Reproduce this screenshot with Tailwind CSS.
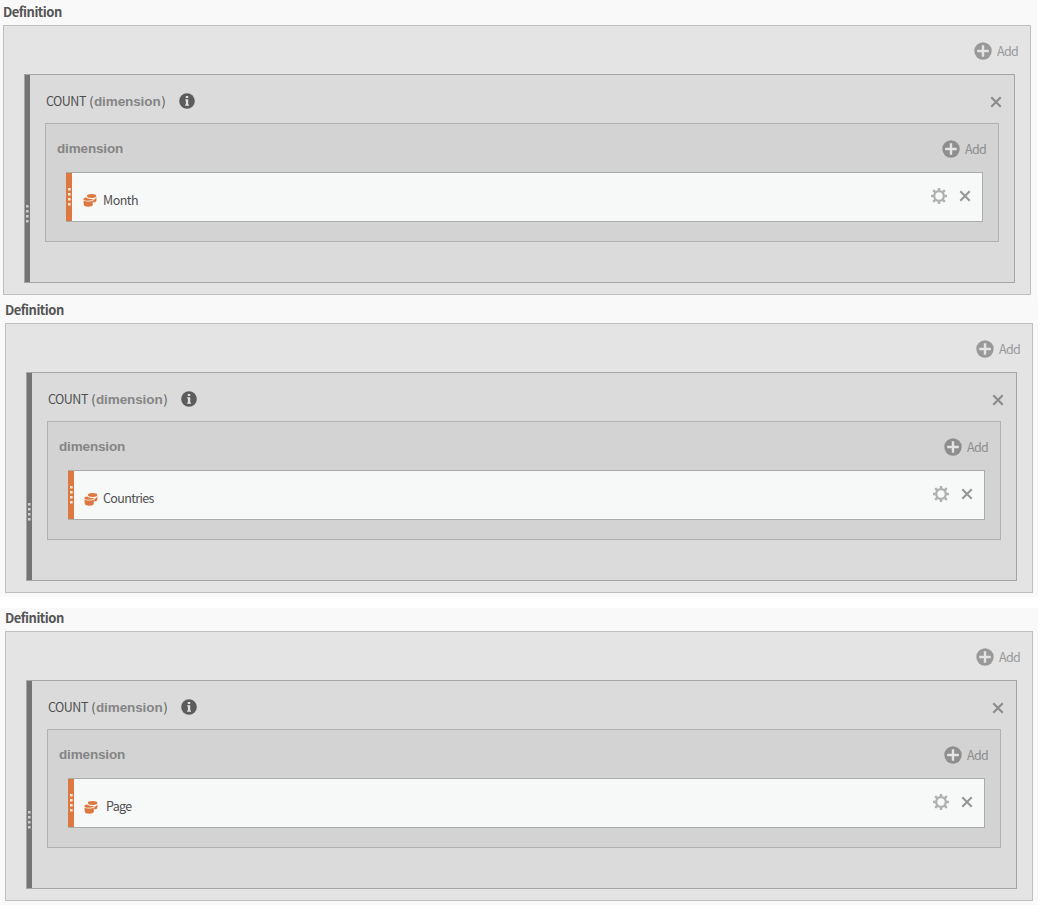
<!DOCTYPE html>
<html lang="en">
<head>
  <meta charset="UTF-8" />
  <meta name="viewport" content="width=device-width, initial-scale=1.0"/>
  <title>Definition</title>
  <script src="https://cdn.jsdelivr.net/npm/@tailwindcss/browser@4"></script>
</head>
<body class="bg-white font-['Noto_Sans_CJK_SC',sans-serif] text-[12.5px] leading-5 tracking-[-0.5px] text-[#4f4f4f]">
  <!-- Shared icons -->
  <svg class="hidden">
    <symbol id="plus" viewBox="0 0 18 18">
      <circle cx="9" cy="9" r="8.7" fill="currentColor"/>
      <path d="M9 3.2v11.6M3.2 9h11.6" stroke="#e4e4e4" stroke-width="2.4"/>
    </symbol>
    <symbol id="info" viewBox="0 0 16 16">
      <circle cx="8" cy="8" r="7.8" fill="#5c5c5c"/>
      <path d="M6.8 2.9h2.4v2.200H6.800zM6.200 6.300h3v5.200h.8v1.300H6.100v-1.300h.8V7.500h-.7z" fill="#e2e2e2"/>
    </symbol>
    <symbol id="close" viewBox="0 0 12 12">
      <path d="M1.3 1.3l9.4 9.4M10.7 1.3l-9.4 9.4" stroke="currentColor" stroke-width="2.1"/>
    </symbol>
    <symbol id="gear" viewBox="0 0 16 16">
      <circle cx="8" cy="8" r="4.8" fill="none" stroke="#b0b0b0" stroke-width="2.3"/>
      <path d="M8 0v3M8 13v3M0 8h3M13 8h3M2.2 2.2l2.4 2.4M11.4 11.4l2.4 2.4M2.2 13.8l2.4-2.4M11.4 4.6l2.4-2.4" stroke="#b0b0b0" stroke-width="2.5"/>
    </symbol>
    <symbol id="data" viewBox="0 0 14 13">
      <ellipse cx="8.6" cy="2" rx="4.7" ry="1.9" fill="#dc7840"/>
      <path d="M13.4 3.3v3.200c0 1.100-1.300 1.900-3.200 2.100V6c1.500-.5 2.700-1.500 3.200-2.700z" fill="#dc7840"/>
      <path d="M.4 5.200c0-1 .9-1.600 2.800-1.700.9 1.200 4 1.700 7 1.200-.5 1.200-2.400 2-5 2S.4 6.200.4 5.200z" fill="#dc7840"/>
      <path d="M.4 6.800c1.200.5 2.900.7 4.900.6 1.900-.1 3.300-.4 4.500-1v4.400c0 1.200-2 1.900-4.500 1.900S.8 12 .8 10.800z" fill="#dc7840"/>
    </symbol>
    <symbol id="grip" viewBox="0 0 4 18">
      <path d="M1 0h2.600v2.600H1zM1 5h2.600v2.600H1zM1 10h2.600v2.600H1zM1 15h2.600v2.600H1z" fill="currentColor"/>
    </symbol>
  </svg>

  <!-- Month -->
  <section class="w-[1037px] h-[298px] bg-[#f9f9f9] pl-[3px] pt-0.5">
    <h2 class="h-[23px] text-[13px] font-bold text-[#555]">Definition</h2>
    <div class="w-[1028px] h-[270px] bg-[#e4e4e4] border border-[#bebebe] pl-5 pr-[15px]">
      <div class="h-12 flex items-center justify-end gap-[5px] pt-px -mr-[3px] text-[#999]">
        <svg class="size-[18px]"><use href="#plus"/></svg>
        <span class="tracking-[-0.7px]">Add</span>
      </div>
      <div class="h-[209px] flex border border-[#a5a5a5] bg-[#dbdbdb]">
        <div class="w-[5px] shrink-0 bg-[#747474] pt-[130px] text-[#ccc]">
          <svg class="w-1 h-[18px]"><use href="#grip"/></svg>
        </div>
        <div class="flex-1 pl-[15px] pr-[15px]">
          <div class="h-12 flex items-center pt-[5px] pl-px -mr-[3px]">
            <span>COUNT <span class="ml-px">(</span><b class="ml-px font-['Liberation_Sans',sans-serif] text-[13.5px] tracking-[-0.1px] text-[#858585]">dimension</b><span class="ml-px">)</span></span>
            <svg class="size-4 ml-3.5 mb-0.5"><use href="#info"/></svg>
            <svg class="size-3 ml-auto text-[#8b8b8b]"><use href="#close"/></svg>
          </div>
          <div class="h-[119px] border border-[#b0b0b0] bg-[#d3d3d3] pl-5 pr-[15px]">
            <div class="h-12 flex items-center pt-px -ml-[9px] -mr-[3px]">
              <b class="font-['Liberation_Sans',sans-serif] text-[13.5px] tracking-[-0.15px] text-[#858585]">dimension</b>
              <div class="ml-auto flex items-center gap-[5px] text-[#8e8e8e]">
                <svg class="size-[18px]"><use href="#plus"/></svg>
                <span class="tracking-[-0.7px]">Add</span>
              </div>
            </div>
            <div class="h-[50px] flex items-center border border-l-0 border-[#a8acab] bg-[#f7f9f8]">
              <div class="w-1.5 h-full bg-[#dc7840] pt-[15px] pl-px text-[#f8e8de]">
                <svg class="w-1 h-[18px]"><use href="#grip"/></svg>
              </div>
              <svg class="w-3.5 h-[13px] mt-[6px] ml-[11px]"><use href="#data"/></svg>
              <span class="mt-[5px] ml-1.5">Month</span>
              <svg class="size-4 ml-auto mb-[3px]"><use href="#gear"/></svg>
              <svg class="size-3 ml-3 mr-[11px] mb-[2px] text-[#969696]"><use href="#close"/></svg>
            </div>
          </div>
        </div>
      </div>
    </div>
  </section>

  <!-- Countries -->
  <section class="w-[1038px] h-[299px] bg-[#f9f9f9] pl-[5px] pt-0.5">
    <h2 class="h-[23px] text-[13px] font-bold text-[#555]">Definition</h2>
    <div class="w-[1028px] h-[270px] bg-[#e4e4e4] border border-[#bebebe] pl-5 pr-[15px]">
      <div class="h-12 flex items-center justify-end gap-[5px] pt-px -mr-[3px] text-[#999]">
        <svg class="size-[18px]"><use href="#plus"/></svg>
        <span class="tracking-[-0.7px]">Add</span>
      </div>
      <div class="h-[209px] flex border border-[#a5a5a5] bg-[#dbdbdb]">
        <div class="w-[5px] shrink-0 bg-[#747474] pt-[130px] text-[#ccc]">
          <svg class="w-1 h-[18px]"><use href="#grip"/></svg>
        </div>
        <div class="flex-1 pl-[15px] pr-[15px]">
          <div class="h-12 flex items-center pt-[5px] pl-px -mr-[3px]">
            <span>COUNT <span class="ml-px">(</span><b class="ml-px font-['Liberation_Sans',sans-serif] text-[13.5px] tracking-[-0.1px] text-[#858585]">dimension</b><span class="ml-px">)</span></span>
            <svg class="size-4 ml-3.5 mb-0.5"><use href="#info"/></svg>
            <svg class="size-3 ml-auto text-[#8b8b8b]"><use href="#close"/></svg>
          </div>
          <div class="h-[119px] border border-[#b0b0b0] bg-[#d3d3d3] pl-5 pr-[15px]">
            <div class="h-12 flex items-center pt-px -ml-[9px] -mr-[3px]">
              <b class="font-['Liberation_Sans',sans-serif] text-[13.5px] tracking-[-0.15px] text-[#858585]">dimension</b>
              <div class="ml-auto flex items-center gap-[5px] text-[#8e8e8e]">
                <svg class="size-[18px]"><use href="#plus"/></svg>
                <span class="tracking-[-0.7px]">Add</span>
              </div>
            </div>
            <div class="h-[50px] flex items-center border border-l-0 border-[#a8acab] bg-[#f7f9f8]">
              <div class="w-1.5 h-full bg-[#dc7840] pt-[15px] pl-px text-[#f8e8de]">
                <svg class="w-1 h-[18px]"><use href="#grip"/></svg>
              </div>
              <svg class="w-3.5 h-[13px] mt-[8px] ml-2.5"><use href="#data"/></svg>
              <span class="mt-[5px] ml-[5px] tracking-[-0.65px]">Countries</span>
              <svg class="size-4 ml-auto mb-[3px]"><use href="#gear"/></svg>
              <svg class="size-3 ml-3 mr-[11px] mb-[2px] text-[#969696]"><use href="#close"/></svg>
            </div>
          </div>
        </div>
      </div>
    </div>
  </section>

  <!-- Page -->
  <section class="w-[1038px] h-[297px] mt-[11px] bg-[#f9f9f9] pl-[5px]">
    <h2 class="h-[23px] text-[13px] font-bold text-[#555]">Definition</h2>
    <div class="w-[1028px] h-[270px] bg-[#e4e4e4] border border-[#bebebe] pl-5 pr-[15px]">
      <div class="h-12 flex items-center justify-end gap-[5px] pt-px -mr-[3px] text-[#999]">
        <svg class="size-[18px]"><use href="#plus"/></svg>
        <span class="tracking-[-0.7px]">Add</span>
      </div>
      <div class="h-[209px] flex border border-[#a5a5a5] bg-[#dbdbdb]">
        <div class="w-[5px] shrink-0 bg-[#747474] pt-[130px] text-[#ccc]">
          <svg class="w-1 h-[18px]"><use href="#grip"/></svg>
        </div>
        <div class="flex-1 pl-[15px] pr-[15px]">
          <div class="h-12 flex items-center pt-[5px] pl-px -mr-[3px]">
            <span>COUNT <span class="ml-px">(</span><b class="ml-px font-['Liberation_Sans',sans-serif] text-[13.5px] tracking-[-0.1px] text-[#858585]">dimension</b><span class="ml-px">)</span></span>
            <svg class="size-4 ml-3.5 mb-0.5"><use href="#info"/></svg>
            <svg class="size-3 ml-auto text-[#8b8b8b]"><use href="#close"/></svg>
          </div>
          <div class="h-[119px] border border-[#b0b0b0] bg-[#d3d3d3] pl-5 pr-[15px]">
            <div class="h-12 flex items-center pt-px -ml-[9px] -mr-[3px]">
              <b class="font-['Liberation_Sans',sans-serif] text-[13.5px] tracking-[-0.15px] text-[#858585]">dimension</b>
              <div class="ml-auto flex items-center gap-[5px] text-[#8e8e8e]">
                <svg class="size-[18px]"><use href="#plus"/></svg>
                <span class="tracking-[-0.7px]">Add</span>
              </div>
            </div>
            <div class="h-[50px] flex items-center border border-l-0 border-[#a8acab] bg-[#f7f9f8]">
              <div class="w-1.5 h-full bg-[#dc7840] pt-[15px] pl-px text-[#f8e8de]">
                <svg class="w-1 h-[18px]"><use href="#grip"/></svg>
              </div>
              <svg class="w-3.5 h-[13px] mt-[8px] ml-2.5"><use href="#data"/></svg>
              <span class="mt-[5px] ml-2 tracking-[-0.65px]">Page</span>
              <svg class="size-4 ml-auto mb-[3px]"><use href="#gear"/></svg>
              <svg class="size-3 ml-3 mr-[11px] mb-[2px] text-[#969696]"><use href="#close"/></svg>
            </div>
          </div>
        </div>
      </div>
    </div>
  </section>
</body>
</html>
